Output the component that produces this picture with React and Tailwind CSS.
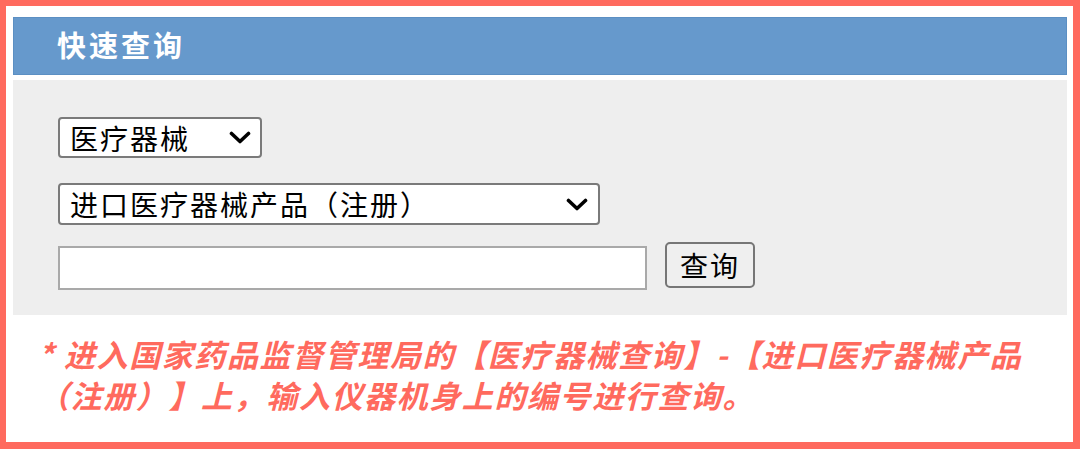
import { useState } from 'react';

const FONT = { fontFamily: '"Noto Sans CJK SC", "Noto Sans", sans-serif' };

function Chevron({ className }) {
  return (
    <svg viewBox="0 0 22 13" className={className} fill="none" stroke="currentColor" strokeWidth="3.6" strokeLinecap="round" strokeLinejoin="round">
      <path d="M2.5 2.5 L11 10.5 L19.5 2.5" />
    </svg>
  );
}

export default function App() {
  const [category, setCategory] = useState('device');
  const [kind, setKind] = useState('import');
  const [code, setCode] = useState('');

  return (
    <div className="w-[1080px] h-[449px] bg-[#ff6a5e] pt-[6px] pl-[6px] pr-[7px] pb-[7px]" style={FONT}>
      <div className="h-full bg-white pt-[11px] pl-[7px] pr-[6px]">
        {/* Header */}
        <div className="h-[58px] bg-[#6699cc] border border-[#5b8fc3] flex items-center pl-[43px] pb-[3px]">
          <span className="text-white font-bold text-[29px] tracking-[3px] leading-none">快速查询</span>
        </div>

        {/* Query panel */}
        <div className="mt-[5px] bg-[#eeeeee] pt-[37px] pb-[25px] pl-[45px] flex flex-col">
          <div className="relative w-[204px] h-[41px]">
            <select
              value={category}
              onChange={(e) => setCategory(e.target.value)}
              className="appearance-none w-full h-full bg-white border-2 border-[#7a7a7a] rounded-[4px] pl-[10px] text-[28px] tracking-[2px] text-black leading-none outline-none"
              style={FONT}
            >
              <option value="device">医疗器械</option>
              <option value="drug">药品</option>
            </select>
            <Chevron className="pointer-events-none absolute left-[171px] top-[14px] w-[22px] h-[13px] text-black" />
          </div>

          <div className="relative w-[542px] h-[42px] mt-[25px]">
            <select
              value={kind}
              onChange={(e) => setKind(e.target.value)}
              className="appearance-none w-full h-full bg-white border-2 border-[#7a7a7a] rounded-[4px] pl-[10px] text-[28px] tracking-[2px] text-black leading-none outline-none"
              style={FONT}
            >
              <option value="import">进口医疗器械产品（注册）</option>
              <option value="domestic">境内医疗器械（注册）</option>
            </select>
            <Chevron className="pointer-events-none absolute left-[508px] top-[15px] w-[22px] h-[13px] text-black" />
          </div>

          <div className="flex items-start gap-[18px] mt-[17px]">
            <input
              value={code}
              onChange={(e) => setCode(e.target.value)}
              className="w-[589px] h-[44px] mt-[4px] bg-white border-2 border-[#a9a9a9] outline-none px-2 text-[24px]"
            />
            <button className="w-[90px] h-[46px] bg-[#efefef] border-2 border-[#767676] rounded-[5px] text-[28px] tracking-[2px] text-black leading-none">
              查询
            </button>
          </div>
        </div>

        {/* Note */}
        <p className="pt-[18px] pl-[25px] text-[#ff6a5e] italic font-bold text-[31px] tracking-[1.6px] leading-[41px] [text-spacing-trim:space-all]">
          * 进入国家药品监督管理局的【医疗器械查询】-【进口医疗器械产品<br />
          （注册）】上，输入仪器机身上的编号进行查询。
        </p>
      </div>
    </div>
  );
}
